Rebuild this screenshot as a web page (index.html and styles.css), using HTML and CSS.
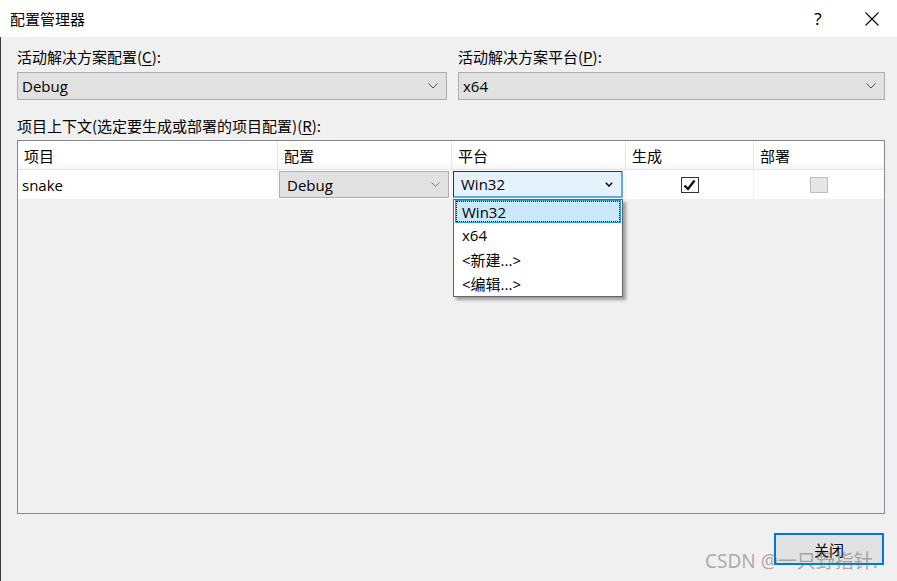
FILE: index.html
```html
<!DOCTYPE html>
<html lang="zh-CN">
<head>
<meta charset="utf-8">
<title>配置管理器</title>
<link rel="stylesheet" href="styles.css">
</head>
<body>
<div class="window">
  <div class="titlebar">
    <span class="title">配置管理器</span>
    <span class="help">?</span>
    <span class="close-x">
      <svg width="14" height="14" viewBox="0 0 14 14"><path d="M0.5 0.5 L13.5 13.5 M13.5 0.5 L0.5 13.5" stroke="#000" stroke-width="1.1" fill="none"/></svg>
    </span>
  </div>
  <div class="content">
    <div class="top-row">
      <div class="field f1">
        <div class="label">活动解决方案配置(<u>C</u>):</div>
        <div class="combo">
          <span>Debug</span>
          <svg class="chev" width="10" height="6" viewBox="0 0 10 6"><path d="M0.5 0.5 L5 5 L9.5 0.5" stroke="#555" stroke-width="1" fill="none"/></svg>
        </div>
      </div>
      <div class="field f2">
        <div class="label">活动解决方案平台(<u>P</u>):</div>
        <div class="combo">
          <span>x64</span>
          <svg class="chev" width="10" height="6" viewBox="0 0 10 6"><path d="M0.5 0.5 L5 5 L9.5 0.5" stroke="#555" stroke-width="1" fill="none"/></svg>
        </div>
      </div>
    </div>
    <div class="label ctx">项目上下文(选定要生成或部署的项目配置)(<u>R</u>):</div>
    <div class="grid">
      <div class="head">
        <div class="hc">项目</div>
        <div class="hc">配置</div>
        <div class="hc">平台</div>
        <div class="hc">生成</div>
        <div class="hc last">部署</div>
      </div>
      <div class="row">
        <div class="cell name">snake</div>
        <div class="cell">
          <div class="cbox">
            <span>Debug</span>
            <svg class="chev" width="9" height="5" viewBox="0 0 9 5"><path d="M0.5 0.5 L4.5 4.5 L8.5 0.5" stroke="#777" stroke-width="1" fill="none"/></svg>
          </div>
        </div>
        <div class="cell plat">
          <div class="cbox focus">
            <span>Win32</span>
            <svg class="chev" width="8" height="5" viewBox="0 0 8 5"><path d="M0.8 0.8 L4 4 L7.2 0.8" stroke="#111" stroke-width="1.6" fill="none"/></svg>
          </div>
          <div class="dropdown">
            <div class="item sel"><span>Win32</span></div>
            <div class="item"><span>x64</span></div>
            <div class="item"><span>&lt;新建...&gt;</span></div>
            <div class="item"><span>&lt;编辑...&gt;</span></div>
          </div>
        </div>
        <div class="cell center">
          <span class="check">
            <svg width="13" height="12" viewBox="0 0 13 12"><path d="M1.5 6.5 L5 10 L11.5 1.5" stroke="#111" stroke-width="2.4" fill="none"/></svg>
          </span>
        </div>
        <div class="cell center last">
          <span class="check disabled"></span>
        </div>
      </div>
    </div>
    <div class="footer">
      <button class="btn">关闭</button>
    </div>
  </div>
  <div class="watermark">CSDN @一只野指针.</div>
</div>
</body>
</html>
```

FILE: styles.css
```css
* { box-sizing: border-box; }
html, body {
  margin: 0;
  padding: 0;
}
body {
  width: 897px;
  height: 581px;
  overflow: hidden;
  font-family: "Open Sans", "Noto Sans CJK SC", sans-serif;
  font-size: 15px;
  color: #000;
  background: #f0f0f0;
}
.window {
  position: relative;
  width: 897px;
  height: 581px;
  display: flex;
  flex-direction: column;
}
.titlebar {
  height: 37px;
  background: #fff;
  display: flex;
  align-items: center;
  padding-left: 10px;
  flex: none;
}
.title {
  font-family: "Noto Sans CJK SC", sans-serif;
  font-size: 15px;
  line-height: 20px;
}
.help {
  margin-left: auto;
  width: 14px;
  text-align: center;
  font-family: "Noto Sans", sans-serif;
  font-size: 17px;
  line-height: 20px;
  margin-right: 40px;
}
.close-x {
  display: flex;
  margin-right: 18px;
}
.content {
  flex: 1;
  border-left: 1px solid #3a3636;
  padding: 10px 12px 0 16px;
  display: flex;
  flex-direction: column;
}
.label {
  font-family: "Noto Sans CJK SC", sans-serif;
  font-size: 15px;
  line-height: 20px;
  height: 20px;
}
.label u { text-decoration-thickness: 1px; text-underline-offset: 2px; }
.top-row {
  display: flex;
  gap: 11px;
}
.f1 { width: 430px; }
.f2 { flex: 1; }
.combo {
  margin-top: 5px;
  height: 28px;
  border: 1px solid #adadad;
  background: #e1e1e1;
  display: flex;
  align-items: center;
  padding: 0 8px 0 4px;
}
.combo span { flex: 1; line-height: 20px; }
.ctx { margin-top: 16px; }
.grid {
  margin-top: 4px;
  height: 374px;
  border: 1px solid #828790;
  background: #f0f0f0;
  display: flex;
  flex-direction: column;
}
.head, .row {
  display: grid;
  grid-template-columns: 260px 174px 174px 128px 1fr;
}
.head {
  height: 29px;
  background: linear-gradient(#ffffff 0, #ffffff 70%, #f7f7f7 100%);
  border-bottom: 1px solid #e5e5e5;
}
.hc {
  font-family: "Noto Sans CJK SC", sans-serif;
  font-size: 15px;
  padding-left: 6px;
  display: flex;
  align-items: center;
  border-right: 1px solid #e5e5e5;
}
.hc.last { border-right: none; }
.row {
  height: 29px;
  background: #fff;
}
.cell {
  border-right: 1px solid #efefef;
  display: flex;
  align-items: center;
  position: relative;
}
.cell.last { border-right: none; }
.cell.name { padding-left: 4px; }
.cell.center { justify-content: center; }
.cbox {
  margin: 1px 0 1px 1px;
  width: 170px;
  height: 27px;
  border: 1px solid #adadad;
  background: #e1e1e1;
  display: flex;
  align-items: center;
  padding: 0 8px 0 7px;
}
.cbox span { flex: 1; }
.cbox.focus {
  background: #e5f1fb;
  border-top: 1px solid #23384c;
  border-left: 1px solid #23384c;
  border-right: 2px solid #66a7e3;
  border-bottom: 2px solid #66a7e3;
  padding-right: 8px;
}
.dropdown {
  position: absolute;
  left: 1px;
  top: 29px;
  width: 170px;
  height: 98px;
  background: #fff;
  border: 1px solid #646464;
  padding: 0 1px;
  box-shadow: 3px 3px 3px rgba(0,0,0,0.35);
  z-index: 2;
}
.item {
  height: 24px;
  display: flex;
  align-items: center;
  padding-left: 7px;
  font-family: "Open Sans", "Noto Sans CJK SC", sans-serif;
}
.item.sel {
  height: 23px;
  background: #cce8ff;
  border: 1px solid #26a0da;
  padding-left: 6px;
  outline: 1px dotted #000;
  outline-offset: -2px;
}
.check {
  width: 18px;
  height: 16px;
  border: 1px solid #333;
  background: #fff;
  display: flex;
  align-items: center;
  justify-content: center;
}
.check.disabled {
  border-color: #bcbcbc;
  background: #e6e6e6;
}
.footer {
  margin-top: 19px;
  display: flex;
  justify-content: flex-end;
  padding-right: 1px;
}
.btn {
  width: 110px;
  height: 32px;
  border: 2px solid #0078d7;
  background: #e1e1e1;
  font-family: "Noto Sans CJK SC", sans-serif;
  font-size: 15px;
  color: #000;
  padding: 0;
}
.watermark {
  position: absolute;
  left: 705px;
  top: 549px;
  font-family: "Noto Sans", "Noto Sans CJK SC", sans-serif;
  font-size: 19px;
  line-height: 24px;
  color: rgba(110, 110, 110, 0.55);
  white-space: nowrap;
  z-index: 3;
}
```
